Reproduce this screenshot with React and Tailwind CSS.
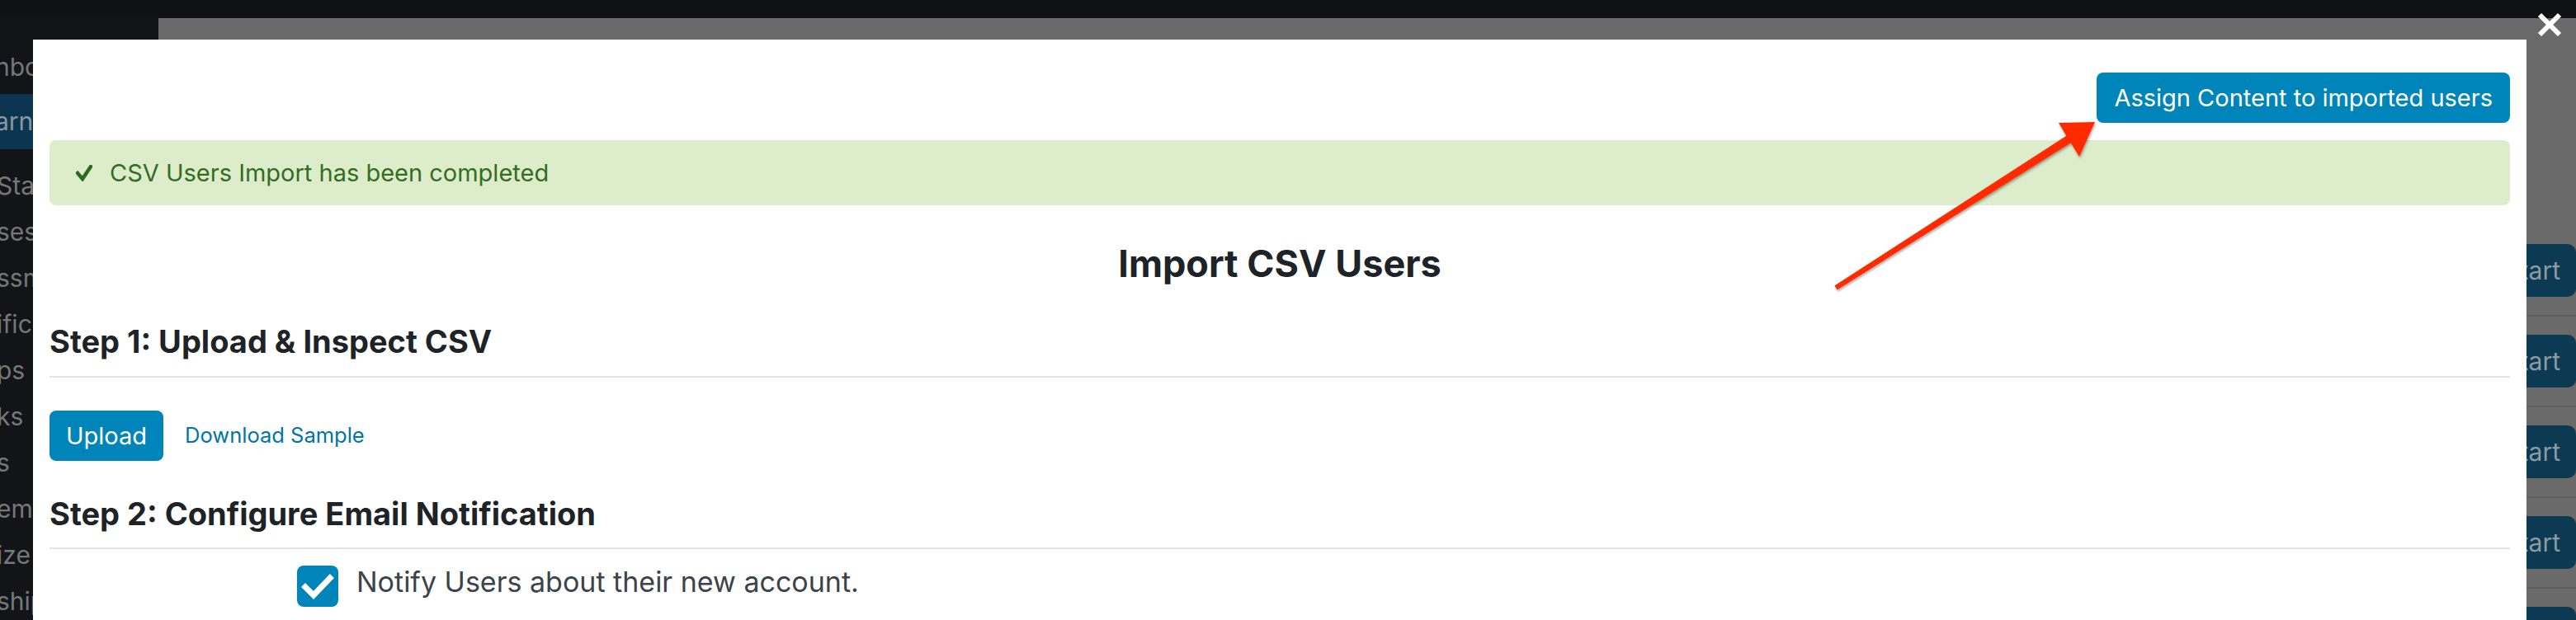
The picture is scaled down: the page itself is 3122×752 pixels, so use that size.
import React from 'react';

const sideItems = ['Start', 'ses', 'ssment', 'ificates', 'ps', 'ks', 's', 'ems', 'ize', 'ships'];

function Check({ className }) {
  return (
    <svg viewBox="0 0 20 20" className={className} fill="none" stroke="currentColor" strokeWidth="4.5" strokeLinecap="square">
      <polyline points="2,10 8,17 18,2" />
    </svg>
  );
}

export default function App() {
  return (
    <div className="relative w-[3122px] h-[752px] overflow-hidden bg-[#696969] font-[Inter,sans-serif]">
      {/* dimmed admin page behind the modal */}
      <div className="flex flex-col h-full">
        <div className="h-[22px] shrink-0 bg-[#0f1215]" />
        <div className="flex flex-1">
          <aside className="w-[192px] shrink-0 overflow-hidden bg-[#121417] pt-[31px] text-[30px] text-[#75787b] whitespace-nowrap">
            <div className="h-[56px] flex items-center -ml-[6px]">nboard</div>
            <div className="mt-[5px] h-[67px] flex items-center bg-[#0b3550] text-[#8b97a0]"><span className="-ml-[6px]">arnDash</span></div>
            <div className="pt-[16px]">
              {sideItems.map((t) => (
                <div key={t} className="h-[56px] flex items-center -ml-[4px]">{t}</div>
              ))}
            </div>
          </aside>
          <main className="flex-1 bg-[#6a6a6a] pt-[252px]">
            {[0, 1, 2, 3, 4].map((i) => (
              <div key={i} className="h-[110px] border-b-2 border-[#5f5f5f] flex items-center justify-end">
                <div className="h-[64px] flex items-center rounded-[10px] bg-[#0c3a52] pl-[40px] pr-[19px] text-[30px] text-[#8c9ba4]">Start</div>
              </div>
            ))}
          </main>
        </div>
      </div>

      {/* modal */}
      <div className="absolute left-[40px] top-[48px] w-[3022px] h-[760px] bg-white px-[20px] pt-[40px]">
        <div className="flex justify-end">
          <button className="h-[61px] px-[21px] rounded-[8px] bg-[#0085ba] text-white text-[29px]">Assign Content to imported users</button>
        </div>
        <div className="mt-[21px] h-[79px] rounded-[8px] bg-[#ddecca] flex items-center pl-[32px] gap-[21px] text-[#336d23] text-[29px]">
          <Check className="w-[20px] h-[20px] text-[#2e6b22]" />
          <span>CSV Users Import has been completed</span>
        </div>
        <h1 className="mt-[48px] text-center text-[45px] leading-none font-bold text-[#1d2327]">Import CSV Users</h1>
        <h2 className="mt-[53px] pb-[23px] border-b-2 border-[#e2e4e7] text-[38px] leading-none font-bold text-[#1d2327]">Step 1: Upload &amp; Inspect CSV</h2>
        <div className="mt-[40px] flex items-center gap-[26px]">
          <button className="h-[61px] px-[20px] rounded-[8px] bg-[#0085ba] text-white text-[29px]">Upload</button>
          <a className="text-[25.5px] text-[#0073aa]">Download Sample</a>
        </div>
        <h2 className="mt-[45px] pb-[22px] border-b-2 border-[#e2e4e7] text-[38px] leading-none font-bold text-[#1d2327]">Step 2: Configure Email Notification</h2>
        <div className="mt-[20px] pl-[300px] flex items-start gap-[22px]">
          <div className="w-[50px] h-[50px] rounded-[8px] bg-[#0085ba] flex items-center justify-center">
            <svg viewBox="0 0 50 50" className="w-[50px] h-[50px]" fill="none" stroke="white" strokeWidth="7" strokeLinecap="square">
              <polyline points="10,26 20,36 40,15" />
            </svg>
          </div>
          <span className="mt-[3px] text-[34px] leading-none text-[#3c434a]">Notify Users about their new account.</span>
        </div>
      </div>

      {/* close button */}
      <svg className="absolute left-[3075px] top-[15px] w-[30px] h-[30px]" viewBox="0 0 30 30" stroke="white" strokeWidth="6">
        <line x1="3" y1="3" x2="27" y2="27" />
        <line x1="27" y1="3" x2="3" y2="27" />
      </svg>

      {/* annotation arrow */}
      <svg className="absolute inset-0 w-[3122px] h-[752px] pointer-events-none" viewBox="0 0 3122 752">
        <defs>
          <filter id="sh" x="-10%" y="-10%" width="120%" height="120%">
            <feDropShadow dx="1" dy="2" stdDeviation="1.5" floodColor="#000" floodOpacity="0.35" />
          </filter>
        </defs>
        <polygon
          filter="url(#sh)"
          fill="#ff2a00"
          points="2223.4,346.5 2504.3,164.8 2495,149 2539,148 2520,190 2509.7,173.2 2226.6,351.5"
        />
      </svg>
    </div>
  );
}
